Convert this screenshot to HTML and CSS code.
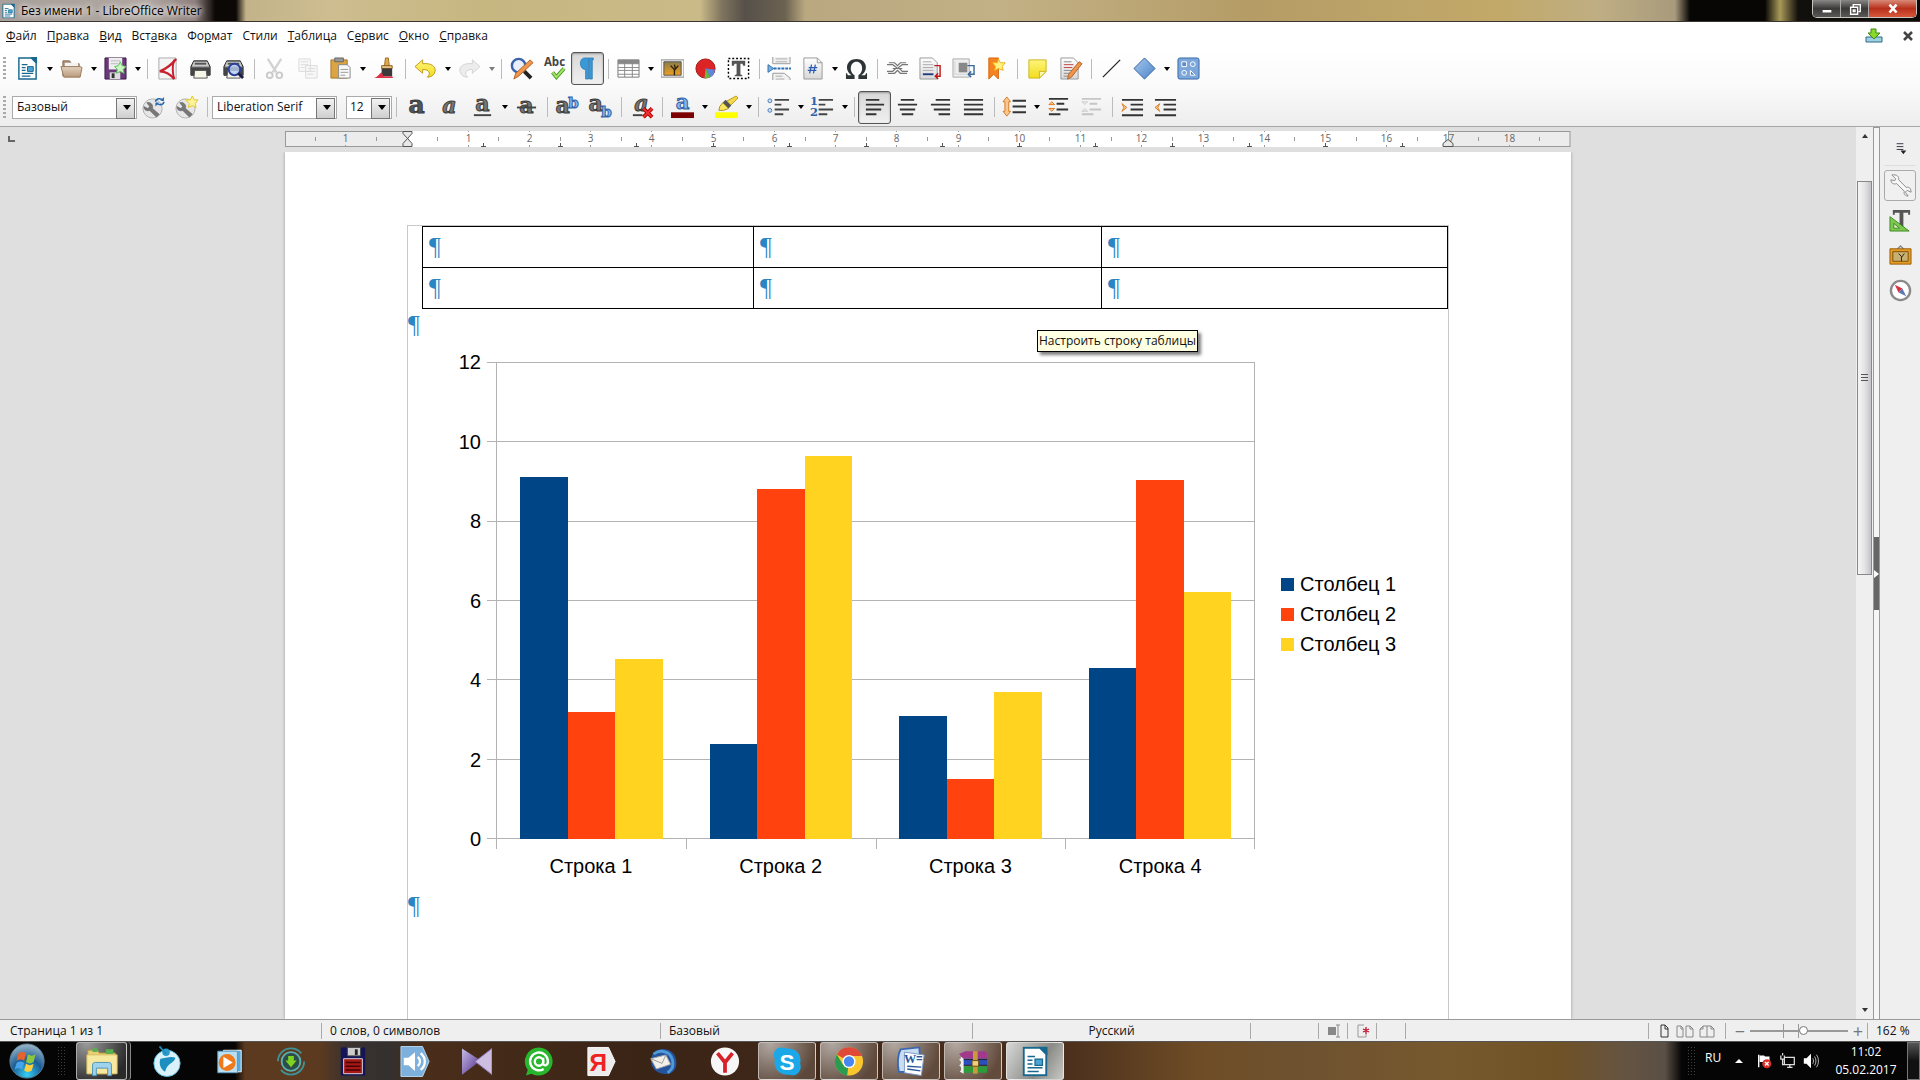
FILE: index.html
```html
<!DOCTYPE html>
<html lang="ru">
<head>
    <meta charset="UTF-8">
    <meta name="viewport" content="width=device-width, initial-scale=1.0">
    <title>Без имени 1 - LibreOffice Writer</title>
    <link rel="stylesheet" href="styles.css">
</head>
<body>
<svg class="defs" aria-hidden="true">
    <defs>
        <linearGradient id="gBlue" x1="0" y1="0" x2="1" y2="1"><stop offset="0" stop-color="#a9c9ee"/><stop offset="1" stop-color="#4a83c8"/></linearGradient>
        <linearGradient id="gPaper" x1="0" y1="0" x2="0" y2="1"><stop offset="0" stop-color="#fff"/><stop offset="1" stop-color="#d8d8d8"/></linearGradient>
        <linearGradient id="gTan" x1="0" y1="0" x2="0" y2="1"><stop offset="0" stop-color="#e4d2bf"/><stop offset="1" stop-color="#b99a7c"/></linearGradient>
        <linearGradient id="gYellow" x1="0" y1="0" x2="0" y2="1"><stop offset="0" stop-color="#fdf57a"/><stop offset="1" stop-color="#f2dc20"/></linearGradient>
        <linearGradient id="gSun" x1="0" y1="0" x2="0" y2="1"><stop offset="0" stop-color="#8a7b4a"/><stop offset="1" stop-color="#f0a020"/></linearGradient>
        <linearGradient id="gPurple" x1="0" y1="0" x2="1" y2="1"><stop offset="0" stop-color="#c9bce8"/><stop offset="1" stop-color="#4a2a86"/></linearGradient>
        <radialGradient id="gOrb" cx=".5" cy=".9" r=".9"><stop offset="0" stop-color="#35d0f5"/><stop offset=".5" stop-color="#1a5d96"/><stop offset="1" stop-color="#9db8c8"/></radialGradient>
        <symbol id="writer" viewBox="0 0 24 24">
            <path d="M3 1h13l5 5v17H3z" fill="#fff" stroke="#17678f" stroke-width="1.500"/><path d="M15 0h7v7z" fill="#17678f"/>
            <path d="M6 8h6M6 11h4M6 14h4M6 17h12M6 20h9" stroke="#17678f" stroke-width="1.300"/><path d="M12 10h6v5h-6z" fill="#4aa5d5" stroke="#17678f"/>
        </symbol>
        <symbol id="printer" viewBox="0 0 24 24">
            <path d="M5 4h14l3 6v9H2v-9z" fill="#777" stroke="#222"/><path d="M5 5h14l2 5H3z" fill="#c9ccca"/><path d="M2 11h20v8H2z" fill="#444"/><path d="M6 7h12" stroke="#555" stroke-width="2"/><path d="M6 14h12l1 8H5z" fill="#f6f6e8" stroke="#555"/>
        </symbol>
        <symbol id="wrench" viewBox="0 0 24 24">
            <circle cx="11" cy="13" r="10" fill="#e6e6e6" stroke="#b0b0b0"/><path d="M5 7l3 4-2 2-4-2c0 4 3 5 6 4l7 7 3-3-7-6c1-4-2-7-6-6z" fill="#777" stroke="#555" stroke-width=".5"/>
        </symbol>
        <symbol id="painting" viewBox="0 0 24 24">
            <path d="M0 3h24v18H0z" fill="#f4f4f4" stroke="#888"/><path d="M3 5h18v14H3z" fill="url(#gSun)" stroke="#555"/><path d="M14 19v-6l-4-4m4 5l4-5m-3 3l-1-4" stroke="#2a2010" fill="none" stroke-width="1.400"/>
        </symbol>
    </defs>
</svg>

<div class="app">
    <header class="titlebar">
        <svg class="app-icon" viewBox="0 0 24 24"><use href="#writer"/></svg>
        <span class="window-title">Без имени 1 - LibreOffice Writer</span>
        <div class="window-buttons">
            <button aria-label="Свернуть"><svg viewBox="0 0 16 16"><path d="M3 9h10v3H3z" fill="#fff"/></svg></button>
            <button aria-label="Восстановить"><svg viewBox="0 0 16 16"><path d="M6 5V3h8v8h-2M3 6h8v8H3zM6 9h2v2H6z" fill="none" stroke="#fff" stroke-width="1.600"/></svg></button>
            <button class="close" aria-label="Закрыть"><svg viewBox="0 0 16 16"><path d="M4 3l8 9M12 3l-8 9" stroke="#fff" stroke-width="3"/></svg></button>
        </div>
    </header>

    <nav class="menubar">
        <a href="#"><u>Ф</u>айл</a>
        <a href="#"><u>П</u>равка</a>
        <a href="#"><u>В</u>ид</a>
        <a href="#">Вст<u>а</u>вка</a>
        <a href="#">Фо<u>р</u>мат</a>
        <a href="#">Стили</a>
        <a href="#"><u>Т</u>аблица</a>
        <a href="#">С<u>е</u>рвис</a>
        <a href="#"><u>О</u>кно</a>
        <a href="#"><u>С</u>правка</a>
        <div class="menubar-right">
            <button aria-label="Обновление"><svg viewBox="0 0 18 16"><path d="M1 9h16v5H1z" fill="#9fd0e0" stroke="#2a6a8a"/><path d="M6 1h5v4h4l-6 6-6-6h3z" fill="#8ad82a" stroke="#3c8a10"/></svg></button>
            <button aria-label="Закрыть документ"><svg viewBox="0 0 18 16"><path d="M5 4l8 8M13 4l-8 8" stroke="#444" stroke-width="2.500"/></svg></button>
        </div>
    </nav>

    <div class="toolbar">
        <span class="grip"></span>
        <button aria-label="Создать"><svg viewBox="0 0 24 24"><use href="#writer"/></svg></button><button class="drop" aria-label="Ещё"></button>
        <button aria-label="Открыть"><svg viewBox="0 0 24 24"><path d="M3 20V4h7l2 3h8v4" fill="#a98f77" stroke="#8a6f58"/><path d="M5 6h14v8H5z" fill="#f3f3f3"/><path d="M1 10h20l2 1-2 10H4z" fill="url(#gTan)" stroke="#98795b"/></svg></button><button class="drop" aria-label="Ещё"></button>
        <button aria-label="Сохранить"><svg viewBox="0 0 24 24"><path d="M1 1h22v22H1z" fill="#6a3a78" stroke="#3a1a48"/><path d="M5 1h14v12H5z" fill="#eee"/><path d="M7 4h10M7 7h8" stroke="#bbb"/><path d="M6 16h11v7H6z" fill="#ddd"/><path d="M8 17h3v5H8z" fill="#333"/><path d="M17 5l2 4 4 1-3 3 1 4-4-2-4 2 1-4-3-3 4-1z" fill="#c8f8c0" stroke="#5ac060"/></svg></button><button class="drop" aria-label="Ещё"></button>
        <span class="sep"></span>
        <button aria-label="PDF"><svg viewBox="0 0 24 24"><path d="M3 1h18v22H3z" fill="#f4f4f4" stroke="#aaa"/><path d="M21 2c-4 5-10 10-17 13 6 0 10 2 15 8" fill="none" stroke="#c8202c" stroke-width="2.500"/><path d="M19 3c-2 6-2 13 0 20" fill="none" stroke="#c8202c" stroke-width="2"/></svg></button>
        <button aria-label="Печать"><svg viewBox="0 0 24 24"><use href="#printer"/></svg></button>
        <button aria-label="Просмотр печати"><svg viewBox="0 0 24 24"><use href="#printer"/><circle cx="13" cy="13" r="6" fill="#b8cdf2" fill-opacity=".8" stroke="#2a3f9a" stroke-width="2"/><path d="M17 17l5 5" stroke="#1a2048" stroke-width="3"/></svg></button>
        <span class="sep"></span>
        <button class="off" aria-label="Вырезать"><svg viewBox="0 0 24 24"><path d="M5 2l9 14M19 2l-9 14" stroke="#aaa" stroke-width="2.500"/><circle cx="7" cy="19" r="3" fill="none" stroke="#999" stroke-width="2"/><circle cx="17" cy="19" r="3" fill="none" stroke="#999" stroke-width="2"/></svg></button>
        <button class="off" aria-label="Копировать"><svg viewBox="0 0 24 24"><path d="M3 2h12v13H3zM10 9h12v13H10z" fill="#f4f4f4" stroke="#bbb"/><path d="M5 5h8M5 8h8M5 11h4M12 12h8M12 15h8M12 18h6" stroke="#bbb"/></svg></button>
        <button aria-label="Вставить"><svg viewBox="0 0 24 24"><path d="M2 3h17v19H2z" fill="#dca544" stroke="#a8742a"/><path d="M6 1h9v4H6z" fill="#999" stroke="#666"/><path d="M10 8h9l3 3v11H10z" fill="#f8f8f8" stroke="#888"/><path d="M12 13h8M12 16h8M12 19h5" stroke="#999"/></svg></button><button class="drop" aria-label="Ещё"></button>
        <button aria-label="Копировать формат"><svg viewBox="0 0 24 24"><path d="M13 1h3l1 8h-5z" fill="#e0a94c" stroke="#a06c20"/><path d="M9 9h11v3H9z" fill="#e6c080" stroke="#8a6020"/><path d="M9 12h11v8H9z" fill="#3a3a3a"/><path d="M1 22c4-1 5-4 8-6l2 4h9l1 2z" fill="#dc2f45"/></svg></button>
        <span class="sep"></span>
        <button aria-label="Отменить"><svg viewBox="0 0 24 24"><path d="M1 10l8-7v4c9-1 14 3 13 8-1 4-4 6-8 6 4-4 2-8-5-8v4z" fill="url(#gYellow)" stroke="#c29a1a"/></svg></button><button class="drop" aria-label="Ещё"></button>
        <button class="off" aria-label="Вернуть"><svg viewBox="0 0 24 24"><path d="M23 10l-8-7v4C6 6 1 10 2 15c1 4 4 6 8 6-4-4-2-8 5-8v4z" fill="#ddd" stroke="#aaa"/></svg></button><button class="drop off" aria-label="Ещё"></button>
        <span class="sep"></span>
        <button aria-label="Найти и заменить"><svg viewBox="0 0 24 24"><circle cx="9" cy="9" r="7" fill="#e9effa" stroke="#3a62ac" stroke-width="2.500"/><path d="M15 15l7 7" stroke="#222" stroke-width="4"/><path d="M21 3l3 3L9 20l-5 3 2-6z" fill="#f0954a" stroke="#b0602a"/></svg></button>
        <button aria-label="Орфография"><svg viewBox="0 0 24 24"><text x="12" y="9" text-anchor="middle" class="abc">Abc</text><path d="M10 16l4 5 8-9" fill="none" stroke="#4a9a20" stroke-width="4"/><path d="M10 16l4 5 8-9" fill="none" stroke="#a5e66a" stroke-width="2"/></svg></button>
        <button class="pressed" aria-label="Непечатаемые символы"><svg viewBox="0 0 24 24"><path d="M9 1h9v2h-1v20h-3V3h-1v20h-3V13c-7 0-7-12-1-12z" fill="#3a9ad8" stroke="#1f6fa8" stroke-width=".7"/></svg></button>
        <span class="sep"></span>
        <button aria-label="Таблица"><svg viewBox="0 0 24 24"><path d="M1 3h22v18H1z" fill="#fff" stroke="#777"/><path d="M1 3h22v4H1z" fill="#888"/><path d="M1 7h22M1 11h22M1 14h22M1 18h22M8 3v18M16 3v18" stroke="#888"/></svg></button><button class="drop" aria-label="Ещё"></button>
        <button aria-label="Изображение"><svg viewBox="0 0 24 24"><use href="#painting"/></svg></button>
        <button aria-label="Диаграмма"><svg viewBox="0 0 24 24"><circle cx="12" cy="12" r="10" fill="#dc2424" stroke="#a01818"/><path d="M12 12l10 1a10 10 0 0 1-3 7z" fill="#7a6ac8"/><path d="M12 12l9 2c0 3-2 6-4 7z" fill="#5a8ad8"/><path d="M12 12l5 9c-2 1-4 1-6 1z" fill="#6ab840"/></svg></button>
        <button aria-label="Врезка"><svg viewBox="0 0 24 24"><path d="M1.500 1.500h21v21h-21z" fill="#fff" stroke="#000" stroke-dasharray="2 2" stroke-width="1.500"/><path d="M5 4h14v5h-2l-1-2h-2v11l2 1v1H8v-1l2-1V7H8L7 9H5z" fill="#555"/></svg></button>
        <span class="sep"></span>
        <button aria-label="Разрыв страницы"><svg viewBox="0 0 24 24"><path d="M5 0v7h18V0M5 24v-7h12l6 5v2" fill="#f1f1f1" stroke="#999"/><path d="M8 2h12M8 5h12M8 20h7M8 23h9" stroke="#aaa"/><path d="M6 12h18" stroke="#2f6fb0" stroke-width="2" stroke-dasharray="3 1"/><path d="M0 8l6 4-6 4z" fill="#7ab0e0" stroke="#2f6fb0"/></svg></button>
        <button aria-label="Поле"><svg viewBox="0 0 24 24"><path d="M3 1h14l5 5v17H3z" fill="url(#gPaper)" stroke="#999"/><path d="M17 1v5h5" fill="none" stroke="#999"/><path d="M11 8l-2 9M15 8l-2 9M8 11h9M7 14h9" stroke="#2a5ab0" stroke-width="1.300"/></svg></button><button class="drop" aria-label="Ещё"></button>
        <button aria-label="Специальный символ"><svg viewBox="0 0 24 24"><path d="M1 23v-6h1l1 2h4C-1 14 1 2 12 2s13 12 5 17h4l1-2h1v6h-9v-4c6-3 5-14-2-14S4 16 10 19v4z" fill="#2e3436"/></svg></button>
        <span class="sep"></span>
        <button aria-label="Гиперссылка"><svg viewBox="0 0 24 24"><path d="M1 8h6l4 3-4 4H1M23 8h-6l-4 3 4 4h6M7 12h10M3 6h6l3 3 3-3h6M2 17h7l3-3 3 3h7" fill="none" stroke="#777" stroke-width="1.300"/></svg></button>
        <button aria-label="Сноска"><svg viewBox="0 0 24 24"><path d="M1 1h13l5 5v17H1z" fill="url(#gPaper)" stroke="#999"/><path d="M4 5h9M4 8h11M4 11h11M4 14h11" stroke="#aaa"/><path d="M4 18h11" stroke="#223a80" stroke-width="2"/><path d="M16 9h6v11h-5m3-3l-3 3 3 3" fill="none" stroke="#c01818" stroke-width="1.500"/></svg></button>
        <button aria-label="Концевая сноска"><svg viewBox="0 0 24 24"><path d="M1 2h17v19H1z" fill="#eee" stroke="#aaa"/><path d="M7 6h9v10H7z" fill="#888"/><path d="M3 5v13h12" fill="none" stroke="#bbb" stroke-dasharray="1 1"/><path d="M16 9h7v9h-5m2-3l-3 3 3 3" fill="none" stroke="#3a6a9a" stroke-width="1.500"/></svg></button>
        <button aria-label="Закладка"><svg viewBox="0 0 24 24"><path d="M4 1h10v22l-5-5-5 5z" fill="#f58220" stroke="#d8660a"/><path d="M14 2l2 4 5 0-3 4 1 4-5-2-4 2 1-4-3-4 5 0z" fill="#fff27a" stroke="#f0b020"/></svg></button>
        <span class="sep"></span>
        <button aria-label="Комментарий"><svg viewBox="0 0 24 24"><path d="M3 3h18v12l-7 7H3z" fill="url(#gYellow)" stroke="#cdb71c"/><path d="M14 22v-7h7z" fill="#fdf8b0" stroke="#cdb71c"/></svg></button>
        <button aria-label="Запись изменений"><svg viewBox="0 0 24 24"><path d="M2 1h13l5 5v17H2z" fill="url(#gPaper)" stroke="#999"/><path d="M5 5h8M5 14h9M5 17h9M5 20h7" stroke="#888"/><path d="M5 8h10M5 11h9" stroke="#c04040"/><path d="M21 5l3 2-11 14-4 2 1-5z" fill="#f0954a" stroke="#b0602a"/></svg></button>
        <span class="sep"></span>
        <button aria-label="Линия"><svg viewBox="0 0 24 24"><path d="M3 21L21 3" stroke="#222" stroke-width="1.300"/></svg></button>
        <button aria-label="Фигуры"><svg viewBox="0 0 24 24"><path d="M12 1l11 11-11 11L1 12z" fill="url(#gBlue)" stroke="#2f5f9f"/></svg></button><button class="drop" aria-label="Ещё"></button>
        <button aria-label="Функции рисования"><svg viewBox="0 0 24 24"><rect x="1" y="1" width="22" height="22" rx="2" fill="#7da7db" stroke="#3465a4"/><path d="M5 5h5v5H5zM14 14v5h5z" fill="#5b8bc9" stroke="#fff"/><circle cx="16.500" cy="7.500" r="2.500" fill="none" stroke="#fff"/><circle cx="7.500" cy="16.500" r="2.500" fill="none" stroke="#fff"/></svg></button>
    </div>

    <div class="toolbar format">
        <span class="grip"></span>
        <div class="combo combo-wide"><select aria-label="Стиль абзаца"><option>Базовый</option></select></div>
        <button aria-label="Обновить стиль"><svg viewBox="0 0 24 24"><use href="#wrench"/><path d="M14 6c1-4 6-4 8-1M23 6c-1 4-6 4-8 1" fill="none" stroke="#2a6ab0" stroke-width="1.500"/><path d="M23 1v4h-4zM14 11V7h4z" fill="#2a6ab0"/></svg></button>
        <button aria-label="Создать стиль"><svg viewBox="0 0 24 24"><use href="#wrench"/><path d="M18 0l2 4h4l-3 4 1 4-4-2-4 2 1-4-4-4h5z" fill="#fdf49a" stroke="#e4c820"/></svg></button>
        <span class="sep"></span>
        <div class="combo combo-wide"><select aria-label="Шрифт"><option>Liberation Serif</option></select></div>
        <div class="combo combo-size"><select aria-label="Кегль"><option>12</option></select></div>
        <span class="sep"></span>
        <button aria-label="Полужирный"><svg viewBox="0 0 24 24"><text x="12" y="18" text-anchor="middle" class="letter bold">a</text></svg></button>
        <button aria-label="Курсив"><svg viewBox="0 0 24 24"><text x="12" y="18" text-anchor="middle" class="letter italic">a</text></svg></button>
        <button aria-label="Подчёркивание"><svg viewBox="0 0 24 24"><text x="12" y="16" text-anchor="middle" class="letter">a</text><path d="M3 20h18" stroke="#444" stroke-width="2"/></svg></button><button class="drop" aria-label="Ещё"></button>
        <button aria-label="Зачёркивание"><svg viewBox="0 0 24 24"><text x="12" y="18" text-anchor="middle" class="letter">a</text><path d="M2 12h20" stroke="#444" stroke-width="2"/></svg></button>
        <span class="sep"></span>
        <button aria-label="Верхний индекс"><svg viewBox="0 0 24 24"><text x="7" y="18" text-anchor="middle" class="letter">a</text><text x="18" y="13" text-anchor="middle" class="index">b</text></svg></button>
        <button aria-label="Нижний индекс"><svg viewBox="0 0 24 24"><text x="7" y="16" text-anchor="middle" class="letter">a</text><text x="18" y="22" text-anchor="middle" class="index">b</text></svg></button>
        <span class="sep"></span>
        <button aria-label="Очистить формат"><svg viewBox="0 0 24 24"><text x="12" y="16" text-anchor="middle" class="letter italic">a</text><path d="M3 20h10" stroke="#444" stroke-width="2"/><path d="M14 13l9 9M23 13l-9 9" stroke="#a00" stroke-width="4"/><path d="M14 13l9 9M23 13l-9 9" stroke="#f03030" stroke-width="2"/></svg></button>
        <span class="sep"></span>
        <button aria-label="Цвет шрифта"><svg viewBox="0 0 24 24"><text x="12" y="14" text-anchor="middle" class="letter blue">a</text><path d="M0 17h24v6H0z" fill="#7d0000"/></svg></button><button class="drop" aria-label="Ещё"></button>
        <button aria-label="Цвет выделения"><svg viewBox="0 0 24 24"><path d="M22 0l2 2-8 8-5-4z" fill="#f6d94a" stroke="#b89a20"/><path d="M11 4l6 6-3 3-6-6z" fill="#555"/><path d="M8 7l6 6-5 2-5 0 1-4z" fill="#fbe860" stroke="#a8901c"/><path d="M0 17h24v6H0z" fill="#ff0"/></svg></button><button class="drop" aria-label="Ещё"></button>
        <span class="sep"></span>
        <button aria-label="Маркированный список"><svg viewBox="0 0 24 24"><circle cx="3" cy="5" r="2" fill="#cfe0f4" stroke="#4a7ab8"/><circle cx="3" cy="15" r="2" fill="#cfe0f4" stroke="#4a7ab8"/><path d="M8 4h15M8 9h7M8 14h15M8 19h9" stroke="#444" stroke-width="2"/></svg></button><button class="drop" aria-label="Ещё"></button>
        <button aria-label="Нумерованный список"><svg viewBox="0 0 24 24"><text x="3" y="9" text-anchor="middle" class="num">1</text><text x="3" y="21" text-anchor="middle" class="num">2</text><path d="M8 4h15M8 9h7M8 14h15M8 19h9" stroke="#444" stroke-width="2"/></svg></button><button class="drop" aria-label="Ещё"></button>
        <span class="sep"></span>
        <button class="pressed" aria-label="По левому краю"><svg viewBox="0 0 24 24"><path d="M3 4h14M3 9h19M3 14h16M3 19h11" stroke="#333" stroke-width="2"/></svg></button>
        <button aria-label="По центру"><svg viewBox="0 0 24 24"><path d="M5 4h14M2 9h20M4 14h16M6 19h12" stroke="#333" stroke-width="2"/></svg></button>
        <button aria-label="По правому краю"><svg viewBox="0 0 24 24"><path d="M7 4h15M2 9h20M5 14h17M10 19h12" stroke="#333" stroke-width="2"/></svg></button>
        <button aria-label="По ширине"><svg viewBox="0 0 24 24"><path d="M2 4h20M2 9h20M2 14h20M2 19h20" stroke="#333" stroke-width="2"/></svg></button>
        <span class="sep"></span>
        <button aria-label="Межстрочный интервал"><svg viewBox="0 0 24 24"><path d="M4 1l4 5H6v10h2l-4 5-4-5h2V6H0z" fill="#f8c890" stroke="#d87a20"/><path d="M10 5h14M10 11h14M10 17h14" stroke="#333" stroke-width="2"/></svg></button><button class="drop" aria-label="Ещё"></button>
        <button aria-label="Увеличить интервал"><svg viewBox="0 0 24 24"><path d="M2 9l3-3 3 3zM2 13l3 3 3-3z" fill="#f8c890" stroke="#d87a20"/><path d="M2 3h20M10 8h8M10 14h12M2 19h12" stroke="#333" stroke-width="2"/></svg></button>
        <button class="off" aria-label="Уменьшить интервал"><svg viewBox="0 0 24 24"><path d="M2 6l3 3 3-3zM2 16l3-3 3 3z" fill="#ddd" stroke="#aaa"/><path d="M2 3h20M10 8h8M10 14h12M2 19h12" stroke="#999" stroke-width="2"/></svg></button>
        <span class="sep"></span>
        <button aria-label="Увеличить отступ"><svg viewBox="0 0 24 24"><path d="M1 8l5 4-5 4 2-4z" fill="#f8c890" stroke="#d87a20"/><path d="M1 4h22M10 9h13M10 14h13M1 20h22" stroke="#333" stroke-width="2"/></svg></button>
        <button aria-label="Уменьшить отступ"><svg viewBox="0 0 24 24"><path d="M6 8l-5 4 5 4-2-4z" fill="#f8c890" stroke="#d87a20"/><path d="M1 4h22M10 9h13M10 14h13M1 20h22" stroke="#333" stroke-width="2"/></svg></button>
    </div>

    <div class="workspace">
        <main class="document">
            <div class="ruler-row">
                <span class="tab-type"></span>
                <svg class="ruler" id="ruler" viewBox="0 0 1286 16"></svg>
            </div>
            <div class="page">
                <div class="page-text">
                    <table>
                        <colgroup><col class="col-first"><col class="col-middle"><col></colgroup>
                        <tr><td>¶</td><td>¶</td><td>¶</td></tr>
                        <tr><td>¶</td><td>¶</td><td>¶</td></tr>
                    </table>
                    <p>¶</p>
                    <figure class="chart">
                        <div class="y-axis"><span>12</span><span>10</span><span>8</span><span>6</span><span>4</span><span>2</span><span>0</span></div>
                        <div class="gridlines"><i></i><i></i><i></i><i></i><i></i><i></i></div>
                        <div class="bars">
                            <div class="group"><i class="s1" style="height:75.8%"></i><i class="s2" style="height:26.7%"></i><i class="s3" style="height:37.8%"></i></div>
                            <div class="group"><i class="s1" style="height:20%"></i><i class="s2" style="height:73.3%"></i><i class="s3" style="height:80.4%"></i></div>
                            <div class="group"><i class="s1" style="height:25.8%"></i><i class="s2" style="height:12.500%"></i><i class="s3" style="height:30.8%"></i></div>
                            <div class="group"><i class="s1" style="height:35.8%"></i><i class="s2" style="height:75.2%"></i><i class="s3" style="height:51.7%"></i></div>
                        </div>
                        <div class="x-axis"><span>Строка 1</span><span>Строка 2</span><span>Строка 3</span><span>Строка 4</span></div>
                        <ul class="legend">
                            <li><i class="s1"></i>Столбец 1</li>
                            <li><i class="s2"></i>Столбец 2</li>
                            <li><i class="s3"></i>Столбец 3</li>
                        </ul>
                    </figure>
                    <p>¶</p>
                </div>
                <div class="tooltip" role="tooltip">Настроить строку таблицы</div>
            </div>
        </main>
        <div class="scrollbar">
            <button class="scroll-up" aria-label="Вверх"></button>
            <div class="track"><div class="thumb"></div></div>
            <button class="scroll-down" aria-label="Вниз"></button>
        </div>
        <div class="splitter"><button aria-label="Скрыть панель"></button></div>
        <aside class="sidebar">
            <button class="side-menu" aria-label="Параметры панели"><svg viewBox="0 0 24 24"><path d="M8 7h7M8 10h7M8 13h7" stroke="#334" stroke-width="1"/><path d="M12 14h6l-3 4z" fill="#222"/></svg></button>
            <button class="active" aria-label="Свойства"><svg viewBox="0 0 24 24"><path d="M3 1l4 4-1 2-4-1c0 4 3 5 6 4l8 8c-1 3 1 5 4 5l-3-4 2-2 4 2c0-4-2-6-5-5l-8-8c1-3-2-6-7-5z" fill="#f8f8f8" stroke="#888"/></svg></button>
            <button aria-label="Стили"><svg viewBox="0 0 24 24"><path d="M4 1h18v5h-2V4h-5v15h-4V4H6v2H4z" fill="#555"/><path d="M1 8v15h20z" fill="#7cc850" stroke="#3e8a20"/><path d="M5 15v5h6z" fill="#e0f0d0" stroke="#3e8a20"/></svg></button>
            <button aria-label="Галерея"><svg viewBox="0 0 24 24"><path d="M8 6l4-4 4 4" fill="none" stroke="#888" stroke-width="1.500"/><path d="M1 5h22v16H1z" fill="#e89a20" stroke="#94600e"/><path d="M4 8h16v10H4z" fill="#c8b070" stroke="#7a5010"/><path d="M13 18v-5l-3-3m3 4l3-4" stroke="#2a2010" fill="none"/></svg></button>
            <button aria-label="Навигатор"><svg viewBox="0 0 24 24"><circle cx="12" cy="12" r="10" fill="#fff" stroke="#8a8a8a" stroke-width="2.500"/><path d="M6 6l8 4-4 4z" fill="#d83040"/><path d="M18 18l-8-4 4-4z" fill="#5a7ab0"/></svg></button>
        </aside>
    </div>

    <footer class="statusbar">
        <span class="st-page">Страница 1 из 1</span>
        <span class="st-words">0 слов, 0 символов</span>
        <span class="st-style">Базовый</span>
        <span class="st-lang">Русский</span>
        <span class="st-blank"></span>
        <span class="st-mode"><svg viewBox="0 0 16 16"><path d="M1 4h8v8H1z" fill="#888"/><path d="M9 2h4M11 2v12M9 14h4" stroke="#888" stroke-width="1"/></svg></span>
        <span class="st-mode"><svg viewBox="0 0 16 16"><path d="M8 2H2v12h8v-3" fill="none" stroke="#999"/><path d="M10 4v7M7 6l6 3M7 9l6-3" stroke="#c01030" stroke-width="1.300"/></svg></span>
        <span class="st-mode"></span>
        <span class="st-fill"></span>
        <span class="st-views">
            <svg viewBox="0 0 16 16"><path d="M4 2h4l3 3v9H4zM8 2v4h3" fill="none" stroke="#333"/></svg>
            <svg class="two" viewBox="0 0 20 16"><path d="M2 3h4l2 2v9H2zM6 3v3h2M11 3h4l3 3v8h-7zM15 3v3h3" fill="none" stroke="#888"/></svg>
            <svg class="two" viewBox="0 0 20 16"><path d="M10 3H6L3 6v8h7zM6 3v3H3M10 3h4l3 3v8h-7M14 3v3h3" fill="none" stroke="#888"/></svg>
        </span>
        <span class="st-zoom"><button aria-label="Уменьшить">−</button><input type="range" min="0" max="100" value="55" aria-label="Масштаб"><button aria-label="Увеличить">+</button></span>
        <span class="st-percent">162 %</span>
    </footer>

    <div class="taskbar">
        <button class="start" aria-label="Пуск"><svg viewBox="0 0 40 40"><circle cx="20" cy="20" r="18" fill="url(#gOrb)" stroke="#5b7c90"/><path d="M11 12c3-2 5-2 8 0l-2 8c-3-2-5-2-8 0z" fill="#e8622c"/><path d="M21 13c3 2 5 2 8 0l-2 8c-3 2-5 2-8 0z" fill="#8cc63e"/><path d="M9 22c3-2 5-2 8 0l-2 7c-3-2-5-2-8 0z" fill="#48a4e8"/><path d="M19 23c3 2 5 2 8 0l-2 7c-3 2-5 2-8 0z" fill="#fccf3c"/></svg></button>
        <span class="dots"></span>
        <button class="task open stacked" aria-label="Проводник"><svg viewBox="0 0 36 32"><path d="M3 4h10l2 3h17v22H3z" fill="#e8cf74" stroke="#b8963c"/><path d="M8 2h5v4H8zM22 3h8v5h-8z" fill="#58b050"/><path d="M2 9h32v20H2z" fill="#f7e8a0" stroke="#d8bc60"/><path d="M8 31V20c0-2 1-3 3-3h14c2 0 3 1 3 3v11h-4v-8H12v8z" fill="#9fd3ec" stroke="#4a90b8"/></svg></button>
        <button class="task" aria-label="Помощник"><svg viewBox="0 0 32 32"><circle cx="16" cy="18" r="14" fill="#d9f2fa" stroke="#58b8d8"/><path d="M9 13c5-1 12-3 16-1-1 6-9 5-11 15-5-3-7-9-5-14z" fill="#1c8fc0"/><circle cx="15" cy="6" r="4" fill="#2a9aca"/><path d="M8 0l7 8" fill="none" stroke="#1c8fc0" stroke-width="2"/></svg></button>
        <button class="task" aria-label="Проигрыватель"><svg viewBox="0 0 32 32"><path d="M10 4h19v23H10z" fill="#5aa8d8" stroke="#fff"/><path d="M4 5h21v23H4z" fill="#b8dff2" stroke="#5898c0"/><circle cx="14" cy="17" r="9" fill="#ee7a1c"/><path d="M10 11l10 6-10 6z" fill="#fff"/></svg></button>
        <button class="task" aria-label="Загрузчик"><svg viewBox="0 0 32 32"><circle cx="16" cy="16" r="14" fill="none" stroke="#3f9296" stroke-width="2" stroke-dasharray="34 10"/><circle cx="16" cy="16" r="10" fill="#2c4d48" stroke="#5ab0b0" stroke-width="2"/><path d="M13 10h6v5h3l-6 7-6-7h3z" fill="#7ed321"/></svg></button>
        <button class="task" aria-label="Диск"><svg viewBox="0 0 32 32"><path d="M3 1h26v30H3z" fill="#14145a"/><path d="M10 1h14v9H10z" fill="#ccc" stroke="#444"/><path d="M18 3h3v6h-3z" fill="#222"/><path d="M6 13h20v16H6z" fill="#a81818" stroke="#ddd"/><path d="M8 17h16M8 21h16M8 25h16" stroke="#400" stroke-width="1.500"/></svg></button>
        <button class="task" aria-label="Звук"><svg viewBox="0 0 32 32"><path d="M1 0h23l7 16-7 16H1z" fill="#7db0dc" stroke="#b8d8f0"/><path d="M4 12h5l7-6v20l-7-6H4z" fill="#fff"/><path d="M19 11c3 3 3 7 0 10M22 7c6 5 6 13 0 18" fill="none" stroke="#fff" stroke-width="2.500"/></svg></button>
        <button class="task" aria-label="KMPlayer"><svg viewBox="0 0 32 32"><path d="M0 2l20 13L0 30z" fill="url(#gPurple)"/><path d="M32 2L14 16l18 14z" fill="#cdbde0" stroke="#8a70b8"/></svg></button>
        <button class="task" aria-label="Агент"><svg viewBox="0 0 32 32"><path d="M16 1a15 15 0 1 1-8 28l-6 2 2-6A15 15 0 0 1 16 1z" fill="#27b62c"/><circle cx="16" cy="16" r="4.500" fill="none" stroke="#fff" stroke-width="2.500"/><path d="M20.500 12v6c0 3 5 3 5-2A9.500 9.500 0 1 0 21 24" fill="none" stroke="#fff" stroke-width="2.500"/></svg></button>
        <button class="task" aria-label="Яндекс"><svg viewBox="0 0 32 32"><path d="M2 1h22l7 15-7 15H2z" fill="#ececec" stroke="#fff"/><text x="13" y="26" text-anchor="middle" class="ya">Я</text></svg></button>
        <button class="task" aria-label="Thunderbird"><svg viewBox="0 0 32 32"><path d="M5 8C12-1 28 2 30 14s-6 17-14 15C6 28 0 18 5 8z" fill="#24549e"/><path d="M6 8c8-6 18-2 20 6s-1 11-5 14" fill="none" stroke="#4f9ad8" stroke-width="3"/><path d="M3 13l16-4 5 10-15 5z" fill="#f1efe8" stroke="#aaa"/><path d="M3 13l12 5 4-9" fill="none" stroke="#999"/></svg></button>
        <button class="task" aria-label="Браузер Yandex"><svg viewBox="0 0 32 32"><circle cx="16" cy="16" r="15" fill="#f7f7f7"/><path d="M8 7l8 10 8-10M16 16v12" fill="none" stroke="#d8202a" stroke-width="4"/></svg></button>
        <button class="task open" aria-label="Skype"><svg viewBox="0 0 32 32"><path d="M9 1c4 0 5 1 8 1 10 0 15 8 13 16 3 8-5 15-11 12C8 31 1 24 3 13 0 7 4 1 9 1z" fill="#1aa8e8"/><text x="16" y="25" text-anchor="middle" class="sk">S</text></svg></button>
        <button class="task open" aria-label="Chrome"><svg viewBox="0 0 32 32"><circle cx="16" cy="16" r="15" fill="#fbc52d"/><path d="M16 16L3 8.500A15 15 0 0 1 30 10H16z" fill="#df4937"/><path d="M16 16l-2 15A15 15 0 0 1 3 8.500L10 20z" fill="#2a9c4f"/><circle cx="16" cy="16" r="7" fill="#fff"/><circle cx="16" cy="16" r="5.500" fill="#4688f0"/></svg></button>
        <button class="task open" aria-label="Word"><svg viewBox="0 0 32 32"><path d="M5 3l20-2 1 26H3C1 18 2 8 5 3z" fill="#c9dcf2" stroke="#3a68b0" stroke-width="2"/><path d="M9 6l21 3-3 22-18-3z" fill="#fff" stroke="#7a9ac8"/><text x="15" y="18" text-anchor="middle" class="wd">W</text><path d="M22 11h6M22 14h6M12 21l15 1M12 24l14 2" stroke="#2b579a" stroke-width="1.500"/></svg></button>
        <button class="task open" aria-label="WinRAR"><svg viewBox="0 0 32 32"><path d="M1 8l7-3h21l2 2v6H5z" fill="#a23a8c"/><path d="M3 13h28v7H5z" fill="#2c4fc0"/><path d="M3 21h28v7H5z" fill="#2f9a3a"/><path d="M5 14h26M5 20h26" stroke="#222"/><path d="M1 9c3 1 3 4 0 5 3 1 3 5 0 6 3 1 3 5 1 7l4 2V13z" fill="#eee"/><path d="M16 5h5v24h-5z" fill="#c89a3c"/><path d="M15 15h7v6h-7z" fill="#eed080" stroke="#6a4a10"/></svg></button>
        <button class="task open current" aria-label="Writer"><svg viewBox="0 0 24 24"><use href="#writer"/></svg></button>
        <div class="tray">
            <span class="dots"></span>
            <span class="lang">RU</span>
            <button class="tray-up" aria-label="Скрытые значки"></button>
            <svg viewBox="0 0 20 20"><path d="M3 3v14" stroke="#fff" stroke-width="1.500"/><path d="M4 4h5l1 1h5v7H9l-1-1H4z" fill="#fff"/><circle cx="12" cy="13" r="5" fill="#d83028"/><path d="M10 11l4 4M14 11l-4 4" stroke="#fff" stroke-width="1.500"/></svg>
            <svg viewBox="0 0 20 20"><path d="M6 6h11v8H6zM9 17h6M12 14v3M2 4v4h4V4M4 1v3M4 8v6h2" fill="none" stroke="#ddd" stroke-width="1.400"/></svg>
            <svg viewBox="0 0 20 20"><path d="M2 7h3l5-5v16l-5-5H2z" fill="#fff"/><path d="M12 7c1 2 1 4 0 6M14 5c2 3 2 7 0 10M16 3c3 4 3 10 0 14" fill="none" stroke="#ccc"/></svg>
            <time class="clock">11:02<br>05.02.2017</time>
            <button class="show-desktop" aria-label="Показать рабочий стол"></button>
        </div>
    </div>
</div>

<script>
    // Horizontal ruler: 2 cm margins on both sides of a 17 cm text area
    const CM = 1286 / 21;
    const ORIGIN = CM * 2;
    let out = '<rect x="' + ORIGIN + '" width="' + CM * 17 + '" height="16" fill="#fff"/>';
    out += '<rect x=".5" y=".5" width="' + ORIGIN + '" height="15" class="ruler-margin"/>';
    out += '<rect x="' + (ORIGIN + CM * 17) + '" y=".5" width="' + (ORIGIN - 1) + '" height="15" class="ruler-margin"/>';
    for (let i = -3; i <= 37; i++) {
        const x = Math.round(ORIGIN + i * CM / 2) - 0.5;
        if (i % 2) {
            out += '<path d="M' + x + ' 6v4" class="tick"/>';
        } else if (i) {
            out += '<path d="M' + x + ' 0v1M' + x + ' 14v2" class="tick"/>';
            out += '<text x="' + x + '" y="11" text-anchor="middle">' + Math.abs(i / 2) + '</text>';
        }
    }
    for (let t = 1.25; t < 17; t += 1.25) {
        const x = Math.round(ORIGIN + t * CM) - 0.5;
        out += '<path d="M' + x + ' 12v3M' + (x - 2.5) + ' 15.500h5" class="tab"/>';
    }
    out += '<path d="M118 .5h9v2l-4.500 5-4.500-5zM118 15.500h9v-3l-4.500-5-4.500 5z" class="marker"/>';
    out += '<path d="M1158 15.500h10v-3l-5-4-5 4z" class="marker"/>';
    document.getElementById("ruler").innerHTML = out;
</script>
</body>
</html>
```
FILE: styles.css
```css
* {
    box-sizing: border-box;
}
body {
    margin: 0;
    font-family: "Open Sans", "Noto Sans", sans-serif;
    font-size: 12px;
    line-height: 16px;
    color: #111;
}
button {
    padding: 0;
    border: 0;
    background: none;
    color: inherit;
    font: inherit;
}
.defs {
    position: absolute;
    width: 0;
    height: 0;
}
.app {
    display: flex;
    flex-direction: column;
    height: 100vh;
    overflow: hidden;
    background: #efefef;
}

/* Window title */
.titlebar {
    display: flex;
    align-items: center;
    height: 22px;
    padding-left: 1px;
    border-bottom: 1px solid #3a3530;
    background: linear-gradient(90deg, #a8a09c 0, #b0a6a0 150px, #8e7f7c 195px, #0c0806 215px, #0c0806 236px, #c3b38a 246px, #cdbd90 330px, #c6b781 480px, #c9ba88 700px, #7f745e 722px, #57504a 745px, #6b6250 785px, #b9a880 805px, #c2b186 1000px, #b59c66 1250px, #c2a969 1500px, #bfae84 1600px, #a89a7c 1675px, #070605 1690px, #070605 1765px, #a99a58 1780px, #12100c 1798px, #0b0a08 100%);
}
.app-icon {
    width: 15px;
    height: 16px;
    margin-right: 5px;
}
.window-title {
    text-shadow: 0 0 6px #fff, 0 0 6px #fff;
    color: #000;
}
.window-buttons {
    display: flex;
    align-self: flex-start;
    height: 18px;
    margin-left: auto;
    margin-right: 3px;
    border: 1px solid #c8c4c0;
    border-top: 0;
    border-radius: 0 0 5px 5px;
    overflow: hidden;
}
.window-buttons button {
    display: flex;
    align-items: center;
    justify-content: center;
    width: 28px;
    border-right: 1px solid #aaa;
    background: linear-gradient(#8a8886, #3c3a38 50%, #5a5856);
}
.window-buttons .close {
    width: 47px;
    border-right: 0;
    background: linear-gradient(#d88a78, #b8301c 50%, #d8583a);
}
.window-buttons svg {
    width: 14px;
    height: 14px;
}

/* Menu */
.menubar {
    display: flex;
    align-items: center;
    gap: 10px;
    height: 28px;
    padding: 0 3px 0 6px;
    background: #fff;
}
.menubar a {
    color: #111;
    text-decoration: none;
}
.menubar-right {
    display: flex;
    gap: 16px;
    margin-left: auto;
}
.menubar-right svg {
    display: block;
    width: 18px;
    height: 16px;
}

/* Toolbars */
.toolbar {
    display: flex;
    align-items: center;
    height: 37px;
    padding-left: 3px;
    background: linear-gradient(#fff, #fafafa);
}
.toolbar.format {
    height: 40px;
    padding-top: 1px;
    border-bottom: 1px solid #a8a8a8;
    background: linear-gradient(#fafafa, #ededed);
}
.grip {
    width: 3px;
    height: 23px;
    margin-right: 5px;
    background: repeating-linear-gradient(#aaa 0 2px, transparent 2px 4px);
}
.toolbar button {
    display: flex;
    align-items: center;
    justify-content: center;
    width: 33px;
    height: 33px;
}
.toolbar svg {
    width: 23px;
    height: 23px;
    overflow: visible;
}
.toolbar .drop {
    width: 11px;
}
.drop::after {
    content: "";
    border: 3px solid transparent;
    border-top: 4px solid #000;
    border-bottom: 0;
}
.toolbar .off {
    opacity: 0.5;
}
.toolbar .pressed {
    border: 1px solid #555;
    border-radius: 3px;
    background: linear-gradient(#d8d8d8, #f0f0f0);
    box-shadow: inset 0 1px 2px #999;
}
.sep {
    width: 8px;
    height: 20px;
    background: linear-gradient(#bbb, #bbb) 4px 0 / 1px 100% no-repeat;
}
.combo {
    position: relative;
    height: 23px;
    margin-left: 1px;
}
.combo-wide {
    width: 125px;
}
.combo-size {
    width: 46px;
    margin-left: 9px;
}
.combo select {
    width: 100%;
    height: 100%;
    padding: 0 20px 0 4px;
    border: 1px solid #aaa;
    border-radius: 0;
    appearance: none;
    background: #fff;
    color: #111;
    font: inherit;
}
.combo::before {
    content: "";
    position: absolute;
    top: 2px;
    right: 2px;
    width: 17px;
    height: 19px;
    border: 1px solid #777;
    background: linear-gradient(#f2f2f2, #cfcfcf);
    pointer-events: none;
}
.combo::after {
    content: "";
    position: absolute;
    top: 9px;
    right: 6px;
    border: 4px solid transparent;
    border-top: 5px solid #000;
    border-bottom: 0;
    pointer-events: none;
}
.combo-size select {
    padding-left: 3px;
    padding-right: 18px;
}
.abc {
    font: bold 12px "Open Sans", sans-serif;
    fill: #444;
}
.letter {
    font: bold 23px "DejaVu Serif", serif;
    fill: #777;
    stroke: #3a3a3a;
    stroke-width: 1px;
}
.letter.bold {
    font-size: 26px;
    fill: #555;
}
.letter.italic {
    font-style: italic;
}
.letter.blue {
    font-size: 22px;
    fill: #8ab4e8;
    stroke: #2f62a8;
}
.index {
    font: bold 16px "DejaVu Serif", serif;
    fill: #8ab4e8;
    stroke: #2f62a8;
}
.num {
    font: bold 12px "DejaVu Serif", serif;
    fill: #2f62a8;
}

/* Document */
.workspace {
    display: flex;
    flex: 1;
    min-height: 0;
}
.document {
    display: flex;
    flex-direction: column;
    flex: 1;
    min-width: 0;
    background: #dfdfdf;
    overflow: hidden;
}
.ruler-row {
    position: relative;
    flex: none;
    height: 25px;
    padding-top: 4px;
}
.tab-type {
    position: absolute;
    left: 8px;
    top: 9px;
    width: 7px;
    height: 6px;
    border-left: 2px solid #666;
    border-bottom: 2px solid #666;
}
.ruler {
    display: block;
    width: 1286px;
    height: 16px;
    margin: 0 auto;
}
.ruler text {
    font: 10px "Open Sans", sans-serif;
    fill: #666;
}
.ruler-margin {
    fill: #ececec;
    stroke: #999;
}
.tick {
    stroke: #999;
}
.tab {
    stroke: #555;
}
.marker {
    fill: #e8e8e8;
    stroke: #555;
}
.page {
    position: relative;
    flex: 1;
    width: 1286px;
    min-height: 0;
    margin: 0 auto;
    padding: 73px 122px 0;
    background: #fff;
    box-shadow: 0 0 3px #999;
    clip-path: inset(0 -4px);
}
.page-text {
    height: 100%;
    border: 1px solid #c8c8c8;
    border-bottom: 0;
}
.page table {
    width: calc(100% - 14px);
    margin: 0 0 1px 14px;
    border-collapse: collapse;
    table-layout: fixed;
}
.page td {
    height: 41px;
    padding: 0 6px;
    border: 1px solid #000;
}
.col-first {
    width: 331px;
}
.col-middle {
    width: 348px;
}
.page td,
.page p {
    font-family: "Liberation Serif", serif;
    font-size: 26px;
    line-height: 30px;
    color: #2a85c4;
}
.page p {
    margin: 0;
}
.tooltip {
    position: absolute;
    left: 752px;
    top: 178px;
    padding: 2px 1px;
    border: 1px solid #000;
    background: #ffffe1;
    box-shadow: 3px 3px 3px rgba(0, 0, 0, 0.5);
    white-space: nowrap;
}

/* Chart */
.chart {
    display: grid;
    grid-template-columns: 73px 6px 9px 759px 1fr;
    grid-template-rows: 477px auto;
    margin: 22px 0 13px;
    font-family: "Liberation Sans", sans-serif;
    font-size: 20px;
    line-height: 24px;
    color: #000;
}
.y-axis {
    grid-area: 1 / 1;
    display: flex;
    flex-direction: column;
    justify-content: space-between;
    margin: -12px 0;
    text-align: right;
}
.gridlines {
    grid-area: 1 / 3 / 2 / 5;
    display: flex;
    flex-direction: column;
    border-right: 1px solid #b3b3b3;
    border-bottom: 1px solid #b3b3b3;
}
.gridlines i {
    flex: 1;
    border-top: 1px solid #b3b3b3;
}
.bars {
    grid-area: 1 / 4;
    display: flex;
    border-left: 1px solid #b3b3b3;
}
.group {
    display: flex;
    flex: 1;
    align-items: flex-end;
    padding: 0 24px 0 23px;
}
.group i {
    flex: 1;
}
.s1 {
    background: #004586;
}
.s2 {
    background: #ff420e;
}
.s3 {
    background: #ffd320;
}
.x-axis {
    grid-area: 2 / 4;
    display: flex;
    text-align: center;
}
.x-axis span {
    flex: 1;
    padding-top: 15px;
    background: linear-gradient(#b3b3b3, #b3b3b3) 0 0 / 1px 10px no-repeat;
}
.x-axis span:last-child {
    background: linear-gradient(#b3b3b3, #b3b3b3) 0 0 / 1px 10px no-repeat, linear-gradient(#b3b3b3, #b3b3b3) 100% 0 / 1px 10px no-repeat;
}
.legend {
    grid-area: 1 / 5 / 3 / 6;
    align-self: center;
    margin: 0 0 12px 26px;
    padding: 0;
    list-style: none;
}
.legend li {
    display: flex;
    align-items: center;
    gap: 6px;
    height: 30px;
}
.legend i {
    width: 13px;
    height: 13px;
}

/* Scrollbar and side panel */
.scrollbar {
    display: flex;
    flex-direction: column;
    width: 17px;
    background: #efefef;
}
.scrollbar button {
    display: flex;
    align-items: center;
    justify-content: center;
    height: 18px;
}
.scrollbar button::after {
    content: "";
    border: 3px solid transparent;
}
.scrollbar .scroll-up::after {
    border-top: 0;
    border-bottom: 4px solid #333;
}
.scrollbar .scroll-down::after {
    border-bottom: 0;
    border-top: 4px solid #333;
}
.track {
    flex: 1;
    padding: 36px 1px 0;
}
.thumb {
    display: flex;
    align-items: center;
    justify-content: center;
    height: 48%;
    border: 1px solid #888;
    background: linear-gradient(90deg, #f6f6f6, #e4e4e6 50%, #c4c4c8);
}
.thumb::after {
    content: "";
    width: 7px;
    height: 8px;
    background: repeating-linear-gradient(#555 0 1px, transparent 1px 3px);
}
.splitter {
    display: flex;
    align-items: center;
    width: 7px;
    border: 1px solid #999;
    border-width: 1px 1px 0;
    background: #f6f6f6;
}
.splitter button {
    display: flex;
    align-items: center;
    justify-content: center;
    width: 100%;
    height: 73px;
    background: #666;
}
.splitter button::after {
    content: "";
    border: 4px solid transparent;
    border-left: 5px solid #fff;
    border-right: 0;
}
.sidebar {
    display: flex;
    flex-direction: column;
    align-items: center;
    gap: 4px;
    width: 40px;
    padding-top: 3px;
    background: #efefef;
}
.sidebar button {
    display: flex;
    align-items: center;
    justify-content: center;
    width: 32px;
    height: 31px;
    border: 1px solid transparent;
    border-radius: 3px;
}
.sidebar svg {
    width: 23px;
    height: 23px;
}
.sidebar .side-menu {
    height: 36px;
    border-bottom-color: #ddd;
    border-radius: 0;
}
.sidebar .active {
    border-color: #aaa;
    background: #f0f0f0;
}

/* Status bar */
.statusbar {
    display: flex;
    align-items: center;
    height: 22px;
    border-top: 1px solid #999;
    background: #efefef;
}
.statusbar > span {
    display: flex;
    align-items: center;
    height: 16px;
    padding-left: 8px;
    border-left: 1px solid #aaa;
}
.statusbar > .st-page {
    width: 321px;
    padding-left: 10px;
    border-left: 0;
}
.st-words {
    width: 339px;
}
.st-style {
    width: 312px;
}
.statusbar > .st-lang {
    justify-content: center;
    width: 278px;
    padding-left: 0;
}
.st-blank {
    width: 68px;
}
.st-mode {
    width: 29px;
}
.st-fill {
    flex: 1;
}
.st-views {
    gap: 2px;
    width: 77px;
}
.st-zoom {
    gap: 4px;
    width: 142px;
}
.st-percent {
    width: 53px;
    white-space: nowrap;
}
.statusbar svg {
    width: 16px;
    height: 16px;
}
.statusbar .two {
    width: 20px;
}
.st-zoom button {
    width: 12px;
    color: #777;
    font-size: 18px;
}
.st-zoom input {
    width: 98px;
    height: 14px;
    margin: 0;
    appearance: none;
    background: linear-gradient(#999, #999) 0 6px / 100% 2px no-repeat, linear-gradient(#999, #999) 33px 0 / 1px 100% no-repeat, linear-gradient(#999, #999) 48px 0 / 1px 100% no-repeat;
}
.st-zoom input::-webkit-slider-thumb {
    appearance: none;
    width: 9px;
    height: 9px;
    border: 1px solid #777;
    border-radius: 50%;
    background: #fff;
}

/* Taskbar */
.taskbar {
    display: flex;
    align-items: center;
    height: 39px;
    border-top: 1px solid #555;
    background: linear-gradient(90deg, #050505 0, #050505 235px, #5c3a20 245px, #5c3a20 320px, #3c322e 345px, #33302f 390px, #4a2e1a 420px, #3a2416 640px, #4a2e1c 1060px, #6e4d26 1200px, #6e5230 1300px, #77592e 1450px, #6f5226 1560px, #665440 1620px, #5a5046 1665px, #050505 1682px, #050505 100%);
}
.start {
    width: 54px;
    height: 38px;
}
.start svg {
    width: 38px;
    height: 38px;
}
.dots {
    width: 8px;
    height: 30px;
    margin: 0 10px 0 3px;
    background: radial-gradient(#777 1px, transparent 1px) 0 0 / 3px 3px;
    opacity: 0.5;
}
.task {
    display: flex;
    align-items: center;
    justify-content: center;
    flex: none;
    width: 58px;
    height: 38px;
    margin: 0 2px;
}
.task svg {
    width: 30px;
    height: 31px;
}
.task.open {
    border: 1px solid rgba(255, 255, 255, 0.6);
    border-radius: 3px;
    background: radial-gradient(circle at 20% 0, rgba(255, 255, 255, 0.6), rgba(255, 255, 255, 0.15) 80%);
}
.task.stacked {
    width: 51px;
    margin: 0 9px 0 1px;
    box-shadow: 3px 0 0 #222, 4px 0 0 #888;
}
.task.stacked svg {
    width: 34px;
}
.task.current {
    background: linear-gradient(120deg, #d8d8d8, #8a8a86 60%, #c8c8c4);
}
.ya {
    font: bold 26px "Liberation Sans", sans-serif;
    fill: #e22;
}
.sk {
    font: bold 24px "Liberation Sans", sans-serif;
    fill: #fff;
}
.wd {
    font: bold 13px "Liberation Serif", serif;
    fill: #2b579a;
}
.tray {
    display: flex;
    align-items: center;
    height: 100%;
    margin-left: auto;
    color: #fff;
}
.tray svg {
    width: 18px;
    height: 18px;
    margin-right: 5px;
}
.lang {
    width: 30px;
    padding-bottom: 6px;
}
.tray-up {
    width: 12px;
    margin-right: 9px;
}
.tray-up::after {
    content: "";
    display: block;
    width: 0;
    border: 4px solid transparent;
    border-top: 0;
    border-bottom: 4px solid #fff;
}
.clock {
    width: 82px;
    text-align: center;
    line-height: 18px;
}
.show-desktop {
    width: 13px;
    height: 100%;
    border: 1px solid #777;
    background: linear-gradient(#555, #111 50%);
}
```
